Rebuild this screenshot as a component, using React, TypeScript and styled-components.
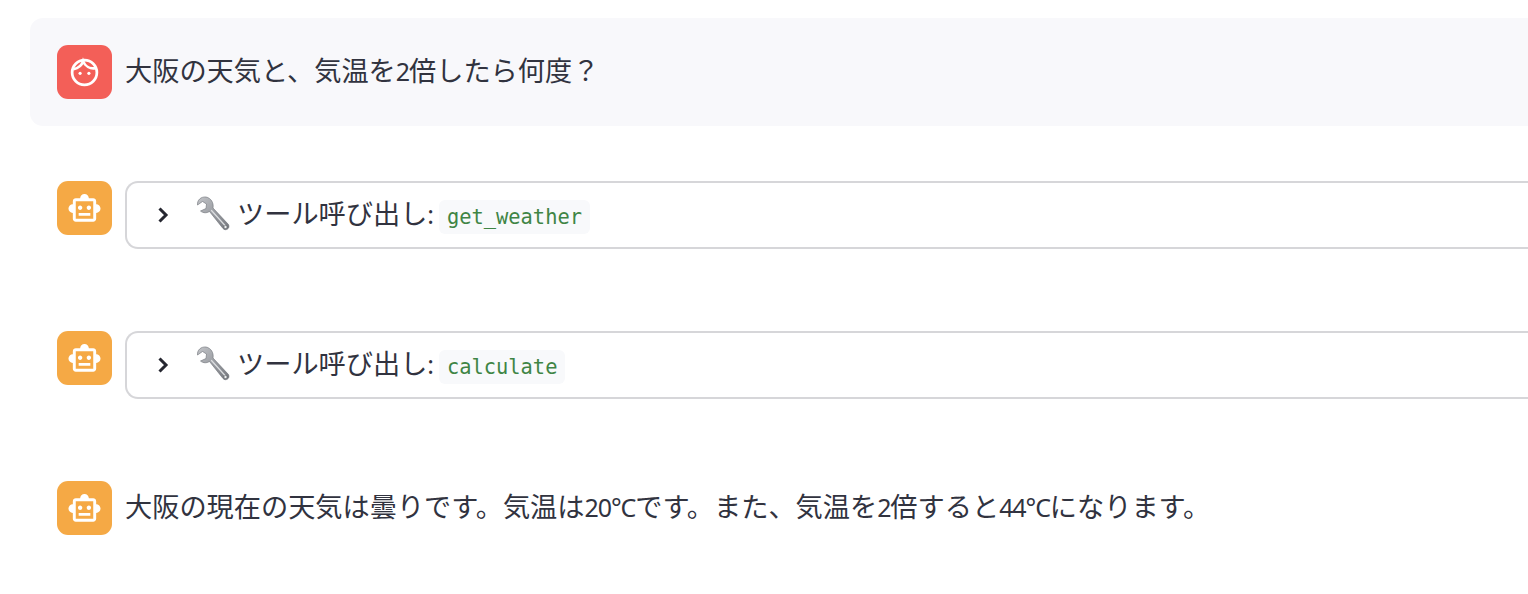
import React from "react";
import styled, { createGlobalStyle } from "styled-components";

const Global = createGlobalStyle`
  html, body { margin: 0; padding: 0; background: #fff; }
  body { font-family: "Noto Sans CJK JP", "Noto Sans", sans-serif; color: #31333f; }
`;

const Page = styled.main`
  height: 594px;
  padding: 18px 0 0 30px;
  box-sizing: border-box;
  display: flex;
  flex-direction: column;
`;

const UserMessage = styled.section`
  display: flex;
  align-items: flex-start;
  gap: 13px;
  height: 108px;
  box-sizing: border-box;
  padding: 27px;
  background: #f8f8fb;
  border-radius: 13px 0 0 13px;
`;

const BotMessage = styled.section<{ $height: number }>`
  display: flex;
  align-items: flex-start;
  gap: 13px;
  height: ${(p) => p.$height}px;
  padding-left: 27px;
`;

const Messages = styled.div`
  display: flex;
  flex-direction: column;
  margin-top: 55px;
`;

const Avatar = styled.div<{ $bg: string }>`
  flex: none;
  width: 55px;
  height: 54px;
  border-radius: 11px;
  background: ${(p) => p.$bg};
  display: flex;
  align-items: center;
  justify-content: center;
  color: #fff;
`;

const Text = styled.p`
  margin: 0;
  font-size: 27.2px;
  line-height: 49px;
  white-space: nowrap;
  color: #31333f;
`;

const Latin = styled.span`
  font-family: "Noto Sans", sans-serif;
  font-size: 25px;
  line-height: 1;
  letter-spacing: -1.1px;
`;

const Expander = styled.div`
  flex: 1;
  height: 68px;
  box-sizing: border-box;
  border: 2px solid #d6d6d9;
  border-right: none;
  border-radius: 13px 0 0 13px;
  display: flex;
  align-items: center;
  padding-left: 26px;
  font-size: 27.2px;
  color: #31333f;
  white-space: nowrap;
`;

const Chevron = styled.svg`
  flex: none;
  width: 18px;
  height: 18px;
  margin-right: 22px;
`;

const Wrench = styled.svg`
  flex: none;
  width: 38px;
  height: 38px;
  margin-right: 6px;
  margin-top: -2px;
`;

const Label = styled.span`
  margin-top: -6px;
  margin-right: 6px;
`;

const Code = styled.code`
  font-family: "DejaVu Sans Mono", "Liberation Mono", monospace;
  font-size: 20.4px;
  line-height: 34px;
  height: 34px;
  padding: 0 8px;
  border-radius: 6px;
  background: #f8f9fb;
  color: #3f8545;
  margin-top: 3px;
`;

const smartToy =
  "M20 9V7c0-1.1-.9-2-2-2h-3c0-1.66-1.34-3-3-3S9 3.34 9 5H6c-1.1 0-2 .9-2 2v2c-1.66 0-3 1.34-3 3s1.34 3 3 3v4c0 1.1.9 2 2 2h12c1.1 0 2-.9 2-2v-4c1.66 0 3-1.34 3-3s-1.34-3-3-3zm-2 10H6V7h12v12zm-9-6c-.83 0-1.5-.67-1.5-1.5S8.17 10 9 10s1.5.67 1.5 1.5S9.83 13 9 13zm7.5-1.5c0 .83-.67 1.5-1.5 1.5s-1.5-.67-1.5-1.5.67-1.5 1.5-1.5 1.5.67 1.5 1.5zM8 15h8v2H8v-2z";

const BotIcon = () => (
  <svg width="35" height="35" viewBox="0 0 24 24" fill="currentColor">
    <path d={smartToy} />
  </svg>
);

const FaceIcon = () => (
  <svg width="33" height="33" viewBox="0 0 24 24" fill="none" stroke="currentColor" strokeWidth="2">
    <circle cx="12" cy="12" r="9" />
    <path d="M4 9.6 C7.5 9 10 7 11 3.8 C12.5 7.5 16 9.6 20 8.8" strokeWidth="1.9" />
    <circle cx="8.8" cy="12.6" r="1.15" fill="currentColor" stroke="none" />
    <circle cx="15.2" cy="12.6" r="1.15" fill="currentColor" stroke="none" />
  </svg>
);

const ToolCall = ({ name }: { name: string }) => (
  <Expander>
    <Chevron viewBox="0 0 18 18" fill="none" stroke="#262730" strokeWidth="3">
      <path d="M6.5 2.5 L13 9 L6.5 15.5" />
    </Chevron>
    <Wrench viewBox="0 0 38 38">
      <defs>
        <linearGradient id="w" x1="0" y1="0" x2="1" y2="1">
          <stop offset="0" stopColor="#c2c4c8" />
          <stop offset="1" stopColor="#74777d" />
        </linearGradient>
      </defs>
      <path
        d="M13 2 C8 1.5 4 5 4.5 10 L9.5 6.5 L13.5 9 L13 13.5 L7.5 16 C10.5 18.5 14 18 16.5 16.5 L30 33.5 C32.5 36.5 37.5 33.5 35.5 29.5 L20 13 C21 8 18 3 13 2 Z"
        fill="url(#w)"
        stroke="#6b6f75"
        strokeWidth="0.6"
      />
      <path d="M18.5 15.5 L32 30.5" stroke="#dcdee0" strokeWidth="1.3" strokeLinecap="round" />
      <circle cx="32.5" cy="32" r="1.6" fill="#eeeff0" stroke="#55585d" strokeWidth="0.5" />
    </Wrench>
    <Label>ツール呼び出し<Latin>:</Latin></Label>
    <Code>{name}</Code>
  </Expander>
);

export default function App() {
  return (
    <Page>
      <Global />
      <UserMessage>
        <Avatar $bg="#f35f58">
          <FaceIcon />
        </Avatar>
        <Text>大阪の天気と、気温を<Latin>2</Latin>倍したら何度？</Text>
      </UserMessage>
      <Messages>
        <BotMessage $height={150}>
          <Avatar $bg="#f5a945">
            <BotIcon />
          </Avatar>
          <ToolCall name="get_weather" />
        </BotMessage>
        <BotMessage $height={150}>
          <Avatar $bg="#f5a945">
            <BotIcon />
          </Avatar>
          <ToolCall name="calculate" />
        </BotMessage>
        <BotMessage $height={100}>
          <Avatar $bg="#f5a945">
            <BotIcon />
          </Avatar>
          <Text>
            大阪の現在の天気は曇りです。気温は<Latin>20°C</Latin>です。また、気温を<Latin>2</Latin>倍すると<Latin>44°C</Latin>になります。
          </Text>
        </BotMessage>
      </Messages>
    </Page>
  );
}
